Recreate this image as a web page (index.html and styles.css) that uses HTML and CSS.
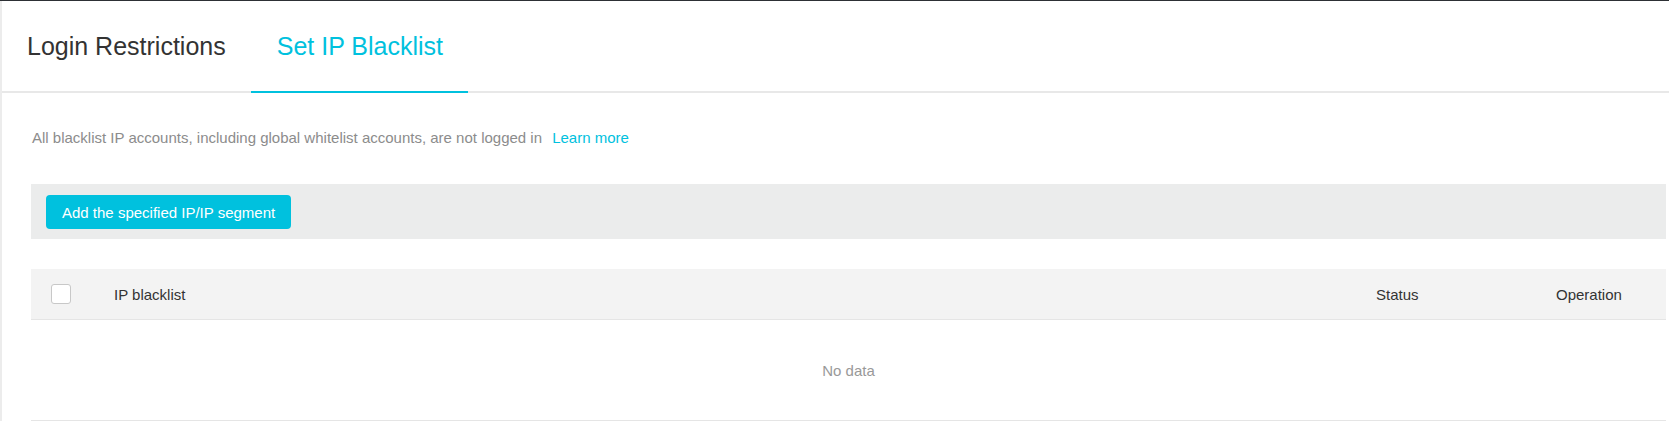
FILE: index.html
```html
<!DOCTYPE html>
<html lang="en">
<head>
<meta charset="utf-8">
<title>Set IP Blacklist</title>
<link rel="stylesheet" href="styles.css">
</head>
<body>
<div class="page">
  <div class="tabs">
    <div class="tab">Login Restrictions</div>
    <div class="tab active">Set IP Blacklist</div>
  </div>
  <div class="content">
    <p class="desc">All blacklist IP accounts, including global whitelist accounts, are not logged in <a class="link" href="#">Learn more</a></p>
    <div class="toolbar">
      <button class="btn">Add the specified IP/IP segment</button>
    </div>
    <div class="table">
      <div class="thead">
        <div class="cell cell-check"><span class="checkbox"></span></div>
        <div class="cell">IP blacklist</div>
        <div class="cell">Status</div>
        <div class="cell">Operation</div>
      </div>
      <div class="empty">No data</div>
    </div>
  </div>
</div>
</body>
</html>
```
FILE: styles.css
```css
* { box-sizing: border-box; }
html, body { margin: 0; padding: 0; background: #fff; }
body {
  font-family: "Liberation Sans", Arial, sans-serif;
  font-size: 15px;
  color: #333;
  border-top: 1px solid #2d3035;
}
.page {
  border-left: 2px solid #ececec;
  min-height: 420px;
}
.tabs {
  display: flex;
  border-bottom: 2px solid #e8e8e8;
}
.tab {
  height: 92px;
  margin-bottom: -2px;
  padding: 0 25px 0 25px;
  display: flex;
  align-items: center;
  font-size: 25px;
  color: #333;
  border-bottom: 2px solid transparent;
}
.tab.active {
  color: #00c1de;
  border-bottom-color: #00c1de;
  padding-left: 26px;
}
.content {
  padding: 0 3px 0 29px;
}
.desc {
  margin: 35px 0 0 0;
  line-height: 20px;
  color: #8c8c8c;
  font-size: 15px;
  padding-left: 1px;
}
.link {
  color: #00c1de;
  text-decoration: none;
  margin-left: 6px;
}
.toolbar {
  margin-top: 36px;
  height: 55px;
  background: #ebecec;
  padding: 0 15px;
  display: flex;
  align-items: center;
}
.btn {
  height: 34px;
  padding: 0 16px;
  border: 0;
  border-radius: 4px;
  background: #00c1de;
  color: #fff;
  font-family: inherit;
  font-size: 15px;
  margin-top: 1px;
}
.table {
  margin-top: 30px;
  border-bottom: 1px solid #e5e5e5;
}
.thead {
  display: grid;
  grid-template-columns: 83px 1fr 180px 110px;
  height: 51px;
  align-items: center;
  background: #f3f3f3;
  border-bottom: 1px solid #e5e5e5;
  color: #333;
}
.cell-check {
  padding-left: 20px;
  display: flex;
  align-items: center;
}
.checkbox {
  width: 20px;
  height: 20px;
  background: #fff;
  border: 1px solid #c8c8c8;
  border-radius: 3px;
}
.empty {
  height: 100px;
  display: flex;
  align-items: center;
  justify-content: center;
  color: #999;
}
```
